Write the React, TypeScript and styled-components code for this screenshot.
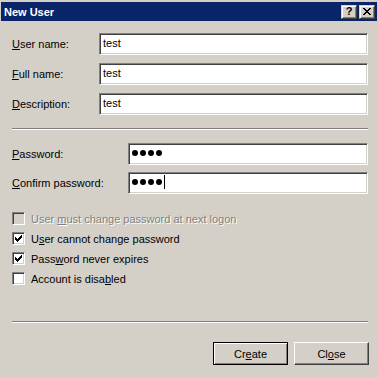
import React from "react";
import styled, { createGlobalStyle } from "styled-components";

const GlobalStyle = createGlobalStyle`
  body {
    margin: 0;
    background: #d4d0c8;
    font-family: "Liberation Sans", Arial, sans-serif;
    font-size: 11px;
    color: #000;
  }
`;

const Window = styled.div`
  width: 378px;
  height: 377px;
  box-sizing: border-box;
  padding-top: 2px;
  background: #d4d0c8;
  display: flex;
  flex-direction: column;
`;

const TitleBar = styled.div`
  height: 19px;
  margin: 0 1px;
  padding: 0 2px 0 3px;
  background: #0a246a;
  display: flex;
  align-items: center;
`;

const Title = styled.span`
  flex: 1;
  color: #fff;
  font-weight: bold;
  font-size: 11px;
`;

const CaptionButton = styled.div`
  width: 16px;
  height: 14px;
  box-sizing: border-box;
  margin-left: 2px;
  background: #d4d0c8;
  border: 1px solid;
  border-color: #d4d0c8 #404040 #404040 #d4d0c8;
  box-shadow: inset 1px 1px #fff, inset -1px -1px #808080;
  display: flex;
  align-items: center;
  justify-content: center;
  font-weight: bold;
  font-size: 11px;
  line-height: 1;
`;

const Content = styled.div`
  flex: 1;
  display: flex;
  flex-direction: column;
  padding: 12px 10px 0 12px;
`;

const Fields = styled.div`
  display: flex;
  flex-direction: column;
  gap: ${(p: { $gap: number }) => p.$gap}px;
`;

const Row = styled.div`
  display: flex;
  align-items: center;
  height: 22px;
`;

const Label = styled.label<{ $width: number }>`
  width: ${(p) => p.$width}px;
  flex-shrink: 0;
`;

const TextBox = styled.div`
  flex: 1;
  height: 22px;
  box-sizing: border-box;
  background: #fff;
  border: 1px solid;
  border-color: #808080 #fff #fff #808080;
  box-shadow: inset 1px 1px #404040, inset -1px -1px #d4d0c8;
  padding: 0 3px 2px 3px;
  display: flex;
  align-items: center;
`;

const Dot = styled.span`
  width: 6px;
  height: 6px;
  border-radius: 50%;
  background: #000;
  margin-right: 2px;
`;

const Caret = styled.span`
  width: 1px;
  height: 14px;
  background: #000;
`;

const Separator = styled.div<{ $top: number; $bottom: number }>`
  height: 0;
  border-top: 1px solid #808080;
  border-bottom: 1px solid #fff;
  margin-top: ${(p) => p.$top}px;
  margin-bottom: ${(p) => p.$bottom}px;
`;

const Options = styled.div`
  margin-top: 18px;
  display: flex;
  flex-direction: column;
  gap: 7px;
`;

const Option = styled.div<{ $disabled?: boolean }>`
  display: flex;
  align-items: center;
  height: 13px;
  gap: 6px;
  color: ${(p) => (p.$disabled ? "#808080" : "#000")};
  text-shadow: ${(p) => (p.$disabled ? "1px 1px 0 #fff" : "none")};
`;

const Box = styled.span<{ $disabled?: boolean }>`
  width: 13px;
  height: 13px;
  box-sizing: border-box;
  flex-shrink: 0;
  background: ${(p) => (p.$disabled ? "#d4d0c8" : "#fff")};
  border: 1px solid;
  border-color: #808080 #fff #fff #808080;
  box-shadow: inset 1px 1px #404040, inset -1px -1px #d4d0c8;
  display: flex;
  align-items: center;
  justify-content: center;
`;

const Buttons = styled.div`
  display: flex;
  justify-content: flex-end;
  gap: 6px;
  margin-right: -1px;
`;

const Button = styled.div<{ $default?: boolean }>`
  width: 75px;
  height: 23px;
  box-sizing: border-box;
  display: flex;
  align-items: center;
  justify-content: center;
  background: #d4d0c8;
  border: 1px solid;
  border-color: ${(p) => (p.$default ? "#000" : "#fff #404040 #404040 #fff")};
  box-shadow: ${(p) =>
    p.$default
      ? "inset 1px 1px #fff, inset -1px -1px #808080"
      : "inset -1px -1px #808080"};
`;

const Check = () => (
  <svg width="7" height="7" shapeRendering="crispEdges">
    {[2, 3, 4, 3, 2, 1, 0].map((y, x) => (
      <rect key={x} x={x} y={y} width="1" height="3" fill="#000" />
    ))}
  </svg>
);

const CloseGlyph = () => (
  <svg width="8" height="7" shapeRendering="crispEdges">
    {[0, 1, 2, 3, 4, 5, 6].map((y) => {
      const a = y <= 3 ? y : 6 - y;
      return (
        <g key={y}>
          <rect x={a} y={y} width="2" height="1" fill="#000" />
          <rect x={6 - a} y={y} width="2" height="1" fill="#000" />
        </g>
      );
    })}
  </svg>
);

const Password = ({ caret }: { caret?: boolean }) => (
  <TextBox>
    <Dot />
    <Dot />
    <Dot />
    <Dot />
    {caret && <Caret />}
  </TextBox>
);

const options = [
  { pre: "User ", key: "m", post: "ust change password at next logon", checked: false, disabled: true },
  { pre: "U", key: "s", post: "er cannot change password", checked: true },
  { pre: "Pass", key: "w", post: "ord never expires", checked: true },
  { pre: "Account is disa", key: "b", post: "led", checked: false },
];

const App = () => {
  return (
    <>
      <GlobalStyle />
      <Window>
        <TitleBar>
          <Title>New User</Title>
          <CaptionButton>?</CaptionButton>
          <CaptionButton>
            <CloseGlyph />
          </CaptionButton>
        </TitleBar>
        <Content>
          <Fields $gap={8}>
            <Row>
              <Label $width={87}>
                <u>U</u>ser name:
              </Label>
              <TextBox>test</TextBox>
            </Row>
            <Row>
              <Label $width={87}>
                <u>F</u>ull name:
              </Label>
              <TextBox>test</TextBox>
            </Row>
            <Row>
              <Label $width={87}>
                <u>D</u>escription:
              </Label>
              <TextBox>test</TextBox>
            </Row>
          </Fields>

          <Separator $top={13} $bottom={13} />

          <Fields $gap={7}>
            <Row>
              <Label $width={116}>
                <u>P</u>assword:
              </Label>
              <Password />
            </Row>
            <Row>
              <Label $width={116}>
                <u>C</u>onfirm password:
              </Label>
              <Password caret />
            </Row>
          </Fields>

          <Options>
            {options.map((o) => (
              <Option key={o.post} $disabled={o.disabled}>
                <Box $disabled={o.disabled}>{o.checked && <Check />}</Box>
                <span>
                  {o.pre}
                  <u>{o.key}</u>
                  {o.post}
                </span>
              </Option>
            ))}
          </Options>

          <Separator $top={36} $bottom={19} />

          <Buttons>
            <Button $default>
              <span>
                Cr<u>e</u>ate
              </span>
            </Button>
            <Button>
              <span>
                Cl<u>o</u>se
              </span>
            </Button>
          </Buttons>
        </Content>
      </Window>
    </>
  );
};

export default App;
